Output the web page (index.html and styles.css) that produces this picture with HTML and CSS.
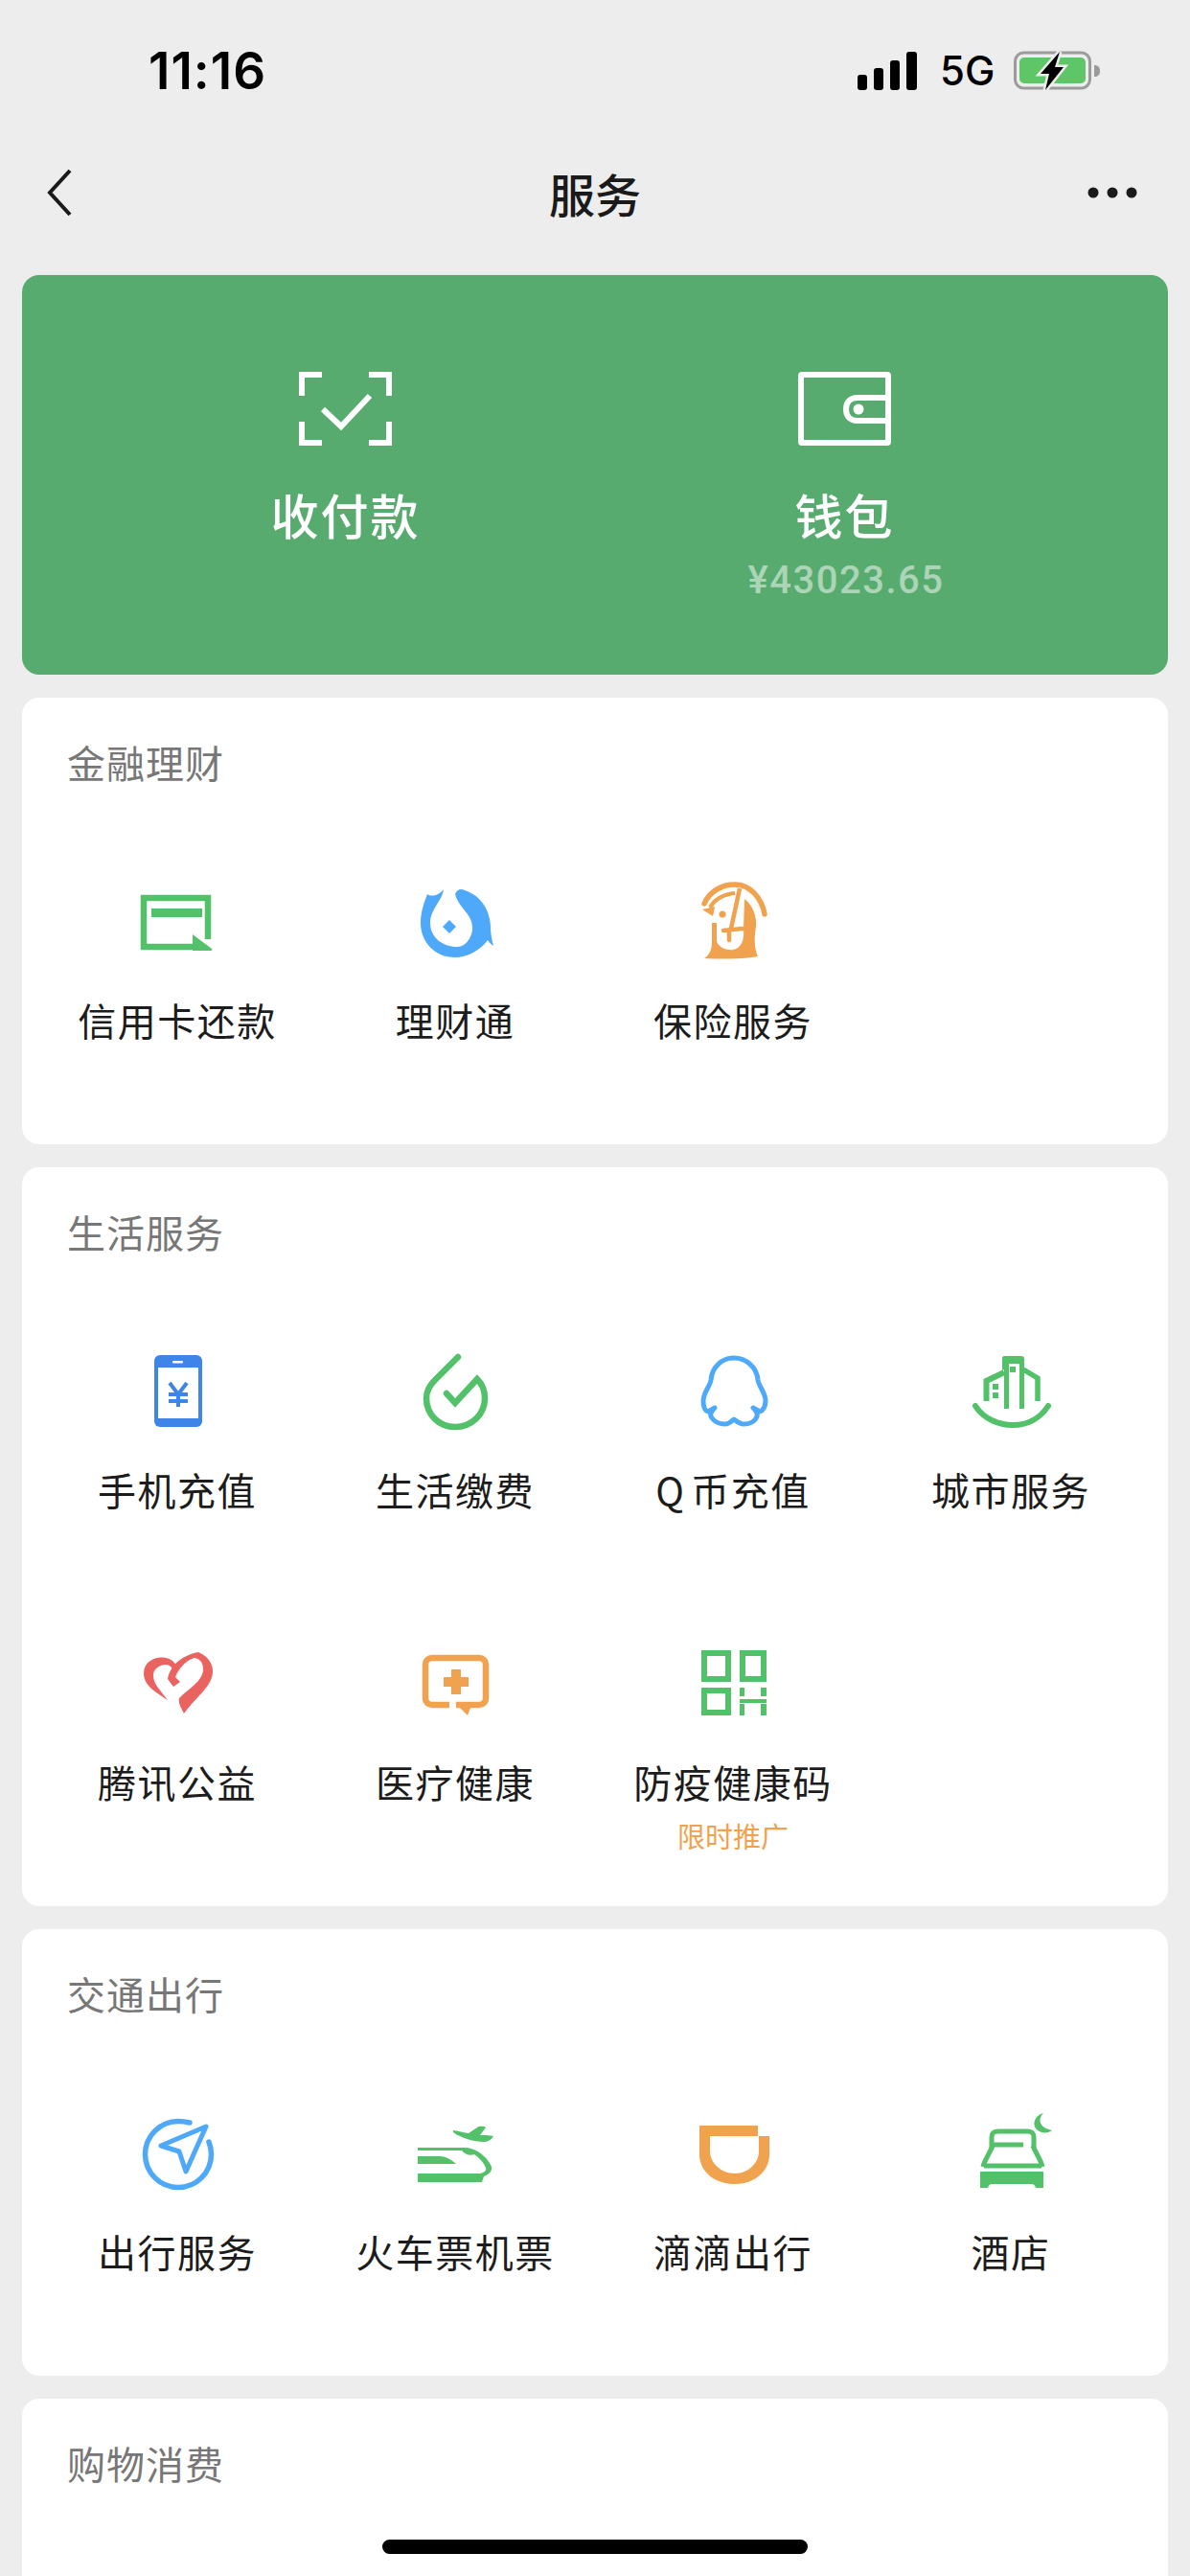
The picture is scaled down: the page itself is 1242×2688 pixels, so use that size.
FILE: index.html
```html
<!DOCTYPE html>
<html lang="zh-CN">
<head>
<meta charset="utf-8">
<title>服务</title>
<link rel="stylesheet" href="styles.css">
</head>
<body>
<div class="page">
  <header class="status">
    <span class="time">11:16</span>
    <div class="status-right">
      <svg class="signal" width="62" height="40" viewBox="0 0 62 40"><rect x="0" y="24" width="10" height="16" rx="3"/><rect x="17" y="17" width="10" height="23" rx="3"/><rect x="34" y="9" width="10" height="31" rx="3"/><rect x="51" y="0" width="11" height="40" rx="3"/></svg>
      <span class="net">5G</span>
      <svg class="battery" width="90" height="42" viewBox="0 0 90 42"><rect x="1.5" y="2" width="78" height="37" rx="9" fill="none" stroke="#9b9b9b" stroke-width="3"/><rect x="6" y="7" width="69" height="27" rx="5" fill="#5fc668"/><path d="M84 15c4 0 6 2 6 6s-2 6-6 6z" fill="#9b9b9b"/><path d="M48 1L28 24H37L33 41L52 17H43Z" fill="#000" stroke="#ededed" stroke-width="5" paint-order="stroke"/></svg>
    </div>
  </header>
  <nav class="nav">
    <svg class="nav-back" width="26" height="50" viewBox="0 0 26 50"><path d="M24 2L3 25L24 48" fill="none" stroke="#1a1a1a" stroke-width="4"/></svg>
    <span class="nav-title">服务</span>
    <svg class="nav-more" width="52" height="12" viewBox="0 0 52 12"><circle cx="6" cy="6" r="5.5"/><circle cx="26" cy="6" r="5.5"/><circle cx="46" cy="6" r="5.5"/></svg>
  </nav>
  <main class="main">
    <section class="hero">
      <div class="hero-item">
        <svg class="hero-icon" width="97" height="77" viewBox="0 0 97 77" fill="none" stroke="#fff" stroke-width="6"><path d="M24 3H3V25M73 3H94V25M3 52V74H24M73 74H94V52"/><path d="M25 39L44 57L74 25"/></svg>
        <div class="hero-label">收付款</div>
      </div>
      <div class="hero-item">
        <svg class="hero-icon" width="97" height="77" viewBox="0 0 97 77" fill="none" stroke="#fff" stroke-width="6" stroke-linejoin="round"><rect x="3" y="3" width="91" height="71" rx="1"/><path d="M93 27H62C53 27 50 33 50 39C50 45 53 51 62 51H93"/><circle cx="63" cy="39" r="5.500" fill="#fff" stroke="none"/></svg>
        <div class="hero-label">钱包</div>
        <div class="hero-amount">¥43023.65</div>
      </div>
    </section>

    <section class="card">
      <h2 class="card-title">金融理财</h2>
      <div class="grid">
        <div class="item">
          <svg class="icon green" viewBox="0 0 100 100"><path class="s" stroke-width="6.5" d="M82 69V26H15V77H66"/><rect x="23" y="37" width="53" height="9"/><path d="M66 64L86 79C87 80 86 81 85 81H66Z"/></svg>
          <div class="label">信用卡还款</div>
        </div>
        <div class="item">
          <svg class="icon blue" viewBox="0 0 100 100"><path d="M50 22C52 17 56 16 60 18C76 23 86 37 87 56C87 62 88 69 90 76C87 74 85 72 84 70C76 81 62 88 50 88C29 88 14 72 14 52C14 40 18 30 21 22C24 25 33 24 38 17C37 28 24 38 24 52C24 67 37 77 52 77C60 77 66 70 68 60C69 48 62 42 56 34C53 30 51 26 50 22Z"/><path d="M44 49L51 56L44 63L37 56Z"/></svg>
          <div class="label">理财通</div>
        </div>
        <div class="item">
          <svg class="icon orange" viewBox="0 0 100 100"><path class="s" stroke-width="5.500" stroke-linecap="round" d="M20 32C26 18 40 12 52 12C68 12 80 26 83 43"/><path class="s" stroke-width="4" d="M26 36C31 27 41 22 52 21"/><path d="M18 38L31 35L29 45Z"/><circle cx="39" cy="43" r="3.500"/><path class="s" stroke-width="4.500" d="M57 16L48 58"/><path class="s" stroke-width="4.500" stroke-linecap="round" d="M40 60L60 58M46 60V70"/><path d="M62 27C70 33 75 44 74 56C72 68 72 78 76 87C60 90 36 90 20 89C26 85 28 79 28 72V52H33V71C35 78 44 81 50 80C59 78 62 70 61 58Z"/></svg>
          <div class="label">保险服务</div>
        </div>
      </div>
    </section>

    <section class="card">
      <h2 class="card-title">生活服务</h2>
      <div class="grid">
        <div class="item">
          <svg class="icon phone" viewBox="0 -2 100 100"><rect x="26" y="11" width="50" height="75" rx="6"/><rect class="w" x="30" y="24" width="42" height="53"/><rect class="w" x="45" y="17" width="11" height="2.500" rx="1"/><path class="s" stroke-width="4" d="M42 40L51 52L60 40M41 52H61M41 59H61M51 52V65"/></svg>
          <div class="label">手机充值</div>
        </div>
        <div class="item">
          <svg class="icon green" viewBox="0 -2 100 100"><path class="s" stroke-width="6.500" stroke-linecap="round" d="M53 13L29 37C23 43 20 49 20 56C20 73 33 86 50 86C67 86 81 73 81 56C81 49 78 41 73 36L50 61L41 51"/></svg>
          <div class="label">生活缴费</div>
        </div>
        <div class="item">
          <svg class="icon blue" viewBox="0 -2 100 100"><path class="s" stroke-width="5" stroke-linejoin="round" d="M51 14C38 14 28 24 27 37C26 44 19 50 19 59C19 65 21 69 24 70L31 66C28 69 26 72 27 75C30 81 37 83 42 83C46 83 48 80 51 78C54 80 57 83 61 83C66 83 73 81 75 75C76 72 74 69 71 66L78 70C81 69 84 65 84 59C84 50 77 44 76 37C75 24 64 14 51 14Z"/></svg>
          <div class="label"><span class="q">Q</span>币充值</div>
        </div>
        <div class="item">
          <svg class="icon green" viewBox="0 -2 100 100"><path class="s" stroke-width="6" stroke-linecap="round" d="M13 64C22 78 38 84 52 84C66 84 80 78 89 64"/><path d="M41 14C41 13 42 12 43 12H61C63 12 64 13 64 15V67H59V20H48V67H43V26L41 27Z"/><path class="s" stroke-width="5.500" d="M63 26L78 35V59"/><path class="s" stroke-width="6" d="M24.500 59V38L43 29"/><rect x="31" y="41" width="6" height="6"/><rect x="31" y="50" width="6" height="6"/><rect x="49" y="23" width="6" height="6"/></svg>
          <div class="label">城市服务</div>
        </div>
        <div class="item">
          <svg class="icon red" viewBox="0 2 100 100"><path d="M57 84C54 78 51 74 52 68C62 58 77 50 77 38C77 31 74 27 68 26C60 28 52 36 48 46L53 51L46 56L40 48C42 36 52 24 72 20C82 24 87 32 87 40C87 56 68 68 57 84Z"/><path d="M38 26C27 24 15 30 15 42C15 55 28 62 40 70C33 60 25 54 25 44C25 37 32 33 38 33C42 33 45 36 46 40L50 36C48 31 44 27 38 26Z"/></svg>
          <div class="label">腾讯公益</div>
        </div>
        <div class="item">
          <svg class="icon orange" viewBox="0 2 100 100"><path class="s" stroke-width="6.500" d="M44 75H26C22 75 19 72 19 68V33C19 29 22 26 26 26H75C79 26 82 29 82 33V68C82 72 79 75 75 75H51"/><path d="M50 73L63 86L68 73Z"/><rect x="46" y="38" width="10" height="26"/><rect x="38" y="46" width="26" height="10"/></svg>
          <div class="label">医疗健康</div>
        </div>
        <div class="item">
          <svg class="icon green" viewBox="0 2 100 100"><path class="s" stroke-width="6" d="M20 21H45V48H20ZM60 21H82V48H60ZM20 60H45V83H20Z"/><path d="M57 57H62V66H57ZM57 74H62V86H57ZM57 69H85V73H57ZM79 57H85V66H79ZM79 74H85V86H79Z"/></svg>
          <div class="label">防疫健康码</div>
          <div class="tag">限时推广</div>
        </div>
      </div>
    </section>

    <section class="card">
      <h2 class="card-title">交通出行</h2>
      <div class="grid">
        <div class="item">
          <svg class="icon blue" viewBox="0 1 100 100"><path class="s" stroke-width="5.500" stroke-linecap="round" d="M63 20C59 19 55 18.500 51 18.500C32 18.500 16.500 34 16.500 53C16.500 72 32 87.500 51 87.500C70 87.500 85.500 72 85.500 53C85.500 48 84.500 44 83 40"/><path class="s" stroke-width="5" stroke-linejoin="round" d="M80 24L33 44L52 50L59 71Z"/></svg>
          <div class="label">出行服务</div>
        </div>
        <div class="item">
          <svg class="icon green" viewBox="0 1 100 100"><path d="M48 28C52 28 60 31 64 31L73 25C76 23 81 24 82 25L76 33C80 33 86 33 90 34C88 38 84 40 80 40C70 40 56 36 48 30Z"/><path d="M11 46H60C72 46 84 56 88 66C89 71 85 74 80 76L78 82H11V73H76C80 72 83 70 82 67C80 62 76 57 70 53C66 55 60 53 57 49H11Z"/><path d="M11 55H34C41 55 46 59 51 63H11Z"/></svg>
          <div class="label">火车票机票</div>
        </div>
        <div class="item">
          <svg class="icon orange" viewBox="0 1 100 100"><path d="M15 23H76V34H26V50C26 62 38 73 52 73C66 73 77 62 77 50V34H88V53C88 71 72 84 52 84C31 84 15 71 15 53Z"/></svg>
          <div class="label">滴滴出行</div>
        </div>
        <div class="item">
          <svg class="icon green" viewBox="0 1 100 100"><path d="M84 10C78 16 79 25 93 28C88 32 80 31 76 26C72 20 76 12 84 10Z"/><path class="s" stroke-width="5" d="M30 46V35C30 30 33 29 37 29H67C71 29 74 30 74 35V46"/><path class="s" stroke-width="5" d="M30 43H63"/><path class="s" stroke-width="5" d="M31 44C28 52 23 58 21 66M73 44C76 52 81 58 83 66"/><path class="s" stroke-width="5" d="M22 65H82"/><path d="M18 71H84V88H76C75 85 74 84 72 84H30C28 84 27 85 26 88H18Z"/></svg>
          <div class="label">酒店</div>
        </div>
      </div>
    </section>

    <section class="card card-last">
      <h2 class="card-title">购物消费</h2>
    </section>
  </main>
  <div class="home-bar"></div>
</div>
</body>
</html>
```
FILE: styles.css
```css
* { box-sizing: border-box; }
html, body {
  margin: 0;
  padding: 0;
  width: 1242px;
  height: 2688px;
  overflow: hidden;
  background: #ededed;
}
body {
  font-family: "Noto Sans CJK SC", "Noto Sans", sans-serif;
  color: #1c1c1c;
}
.page { position: relative; width: 1242px; height: 2688px; overflow: hidden; }

.status {
  height: 148px;
  display: flex;
  align-items: center;
  justify-content: space-between;
  padding: 0 94px 0 155px;
}
.time {
  font-family: Inter, "Liberation Sans", sans-serif;
  font-weight: 600;
  font-size: 53px;
  line-height: 60px;
  letter-spacing: 1px;
  color: #000;
}
.status-right { display: flex; align-items: center; gap: 24px; }
.signal { fill: #000; display: block; }
.battery { display: block; }
.net {
  font-family: Inter, "Liberation Sans", sans-serif;
  font-size: 42px;
  font-weight: 500;
  line-height: 48px;
  color: #000;
  width: 53px;
  white-space: nowrap;
}

.nav {
  height: 106px;
  margin-bottom: 33px;
  display: grid;
  grid-template-columns: 1fr auto 1fr;
  align-items: center;
  padding: 0 49px;
}
.nav-back { display: block; }
.nav-more { display: block; fill: #1a1a1a; justify-self: end; margin-right: 6px; }
.nav-title {
  font-size: 48px;
  font-weight: 500;
  line-height: 56px;
  color: #1a1a1a;
}

.main {
  display: flex;
  flex-direction: column;
  gap: 24px;
  padding: 0 23px;
}

.hero {
  height: 417px;
  border-radius: 18px;
  background: #57ab6e;
  display: flex;
  justify-content: center;
  padding-top: 101px;
}
.hero-item {
  width: 521px;
  display: flex;
  flex-direction: column;
  align-items: center;
}
.hero-icon { display: block; flex: none; }
.hero-label {
  margin-top: 41px;
  font-size: 50px;
  font-weight: 500;
  line-height: 60px;
  letter-spacing: 2px;
  color: #fff;
}
.hero-amount {
  margin-top: 15px;
  padding-left: 3px;
  font-family: Roboto, "Liberation Sans", sans-serif;
  font-size: 40px;
  font-weight: 500;
  line-height: 50px;
  letter-spacing: 1.5px;
  color: rgba(255, 255, 255, 0.5);
}

.card {
  background: #fff;
  border-radius: 18px;
  padding-bottom: 23px;
}
.card-last { min-height: 400px; }
.card-title {
  margin: 0;
  height: 138px;
  padding-left: 47px;
  font-size: 40px;
  font-weight: 400;
  line-height: 134px;
  letter-spacing: 1px;
  color: #777;
}
.grid {
  display: grid;
  grid-template-columns: repeat(4, 290px);
  grid-auto-rows: 305px;
  padding-left: 17px;
}
.item {
  display: flex;
  flex-direction: column;
  align-items: center;
  padding-top: 45px;
}
.icon { width: 100px; height: 100px; display: block; flex: none; }
.label {
  margin-top: 25px;
  font-size: 40px;
  line-height: 56px;
  letter-spacing: 1.5px;
  color: #1c1c1c;
  white-space: nowrap;
}
.q { margin-right: 6px; }
.tag {
  margin-top: 6px;
  font-size: 29px;
  line-height: 44px;
  color: #f0a24f;
  white-space: nowrap;
}

.green { fill: #52c169; color: #52c169; }
.blue { fill: #4fa9fb; color: #4fa9fb; }
.orange { fill: #f0a24f; color: #f0a24f; }
.red { fill: #eb6360; color: #eb6360; }
.phone { fill: #3f85e8; color: #3f85e8; }
.s { fill: none; stroke: currentColor; }
.w { fill: #fff; }

.home-bar {
  position: absolute;
  left: 399px;
  top: 2650px;
  width: 444px;
  height: 15px;
  border-radius: 8px;
  background: #000;
}
```
